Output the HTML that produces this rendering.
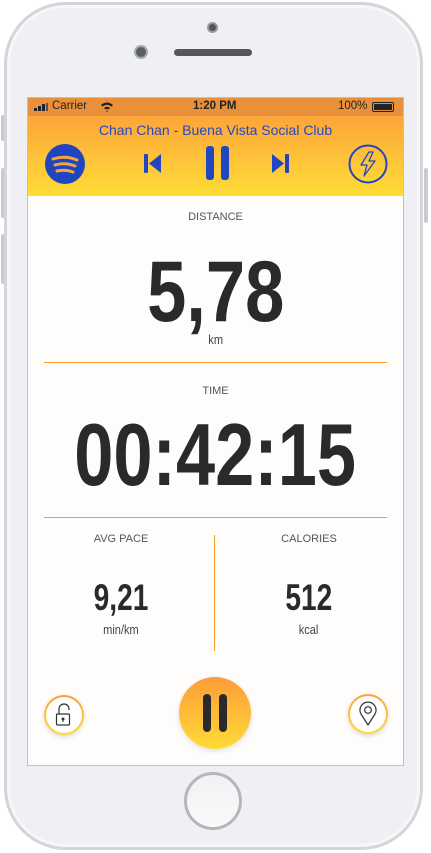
<!DOCTYPE html>
<html><head><style>
*{margin:0;padding:0;box-sizing:border-box}
body{width:431px;height:853px;background:#fff;position:relative;overflow:hidden;font-family:"Liberation Sans",sans-serif}
.phone{position:absolute;left:4px;top:2px;width:419px;height:848px;border-radius:62px;background:#eff0f3;border:3px solid #d4d5d8;box-shadow:inset 0 0 0 3px #f7f7f9}
.btn{position:absolute;background:#c9cacd;border-radius:2px}
.screen{position:absolute;left:27px;top:97px;width:377px;height:669px;background:#fefdfc;border:1px solid #c0c0c4;overflow:hidden}
.status{position:absolute;left:0;top:0;width:100%;height:18px;background:#e9913a;font-size:11.5px;color:#222}
.hdr{position:absolute;left:0;top:18px;width:100%;height:80px;background:linear-gradient(#fda53a,#fedd36)}
.n{position:absolute;left:0;width:100%;text-align:center;font-weight:bold;color:#2a2a2a}
.n span{display:inline-block}
.lbl{position:absolute;text-align:center;font-size:11px;color:#555;width:100%;left:0}
.u{position:absolute;text-align:center;font-size:13px;color:#444}
.u span{display:inline-block;transform:scaleX(.85)}
.rb{position:absolute;width:40px;height:40px;border-radius:50%;background:linear-gradient(#fca23a,#fedb37);padding:2px;box-shadow:0 2px 5px rgba(0,0,0,.15)}
.rb div{width:100%;height:100%;border-radius:50%;background:#fff;display:flex;align-items:center;justify-content:center}
</style></head><body>
<div class="btn" style="left:1px;top:115px;width:4px;height:26px"></div>
<div class="btn" style="left:1px;top:168px;width:4px;height:50px"></div>
<div class="btn" style="left:1px;top:234px;width:4px;height:50px"></div>
<div class="btn" style="left:424px;top:168px;width:4px;height:55px"></div>
<div class="phone"></div>
<div style="position:absolute;left:207px;top:22px;width:11px;height:11px;border-radius:50%;background:#555;border:2px solid #999"></div>
<div style="position:absolute;left:134px;top:45px;width:14px;height:14px;border-radius:50%;background:#5a5e6a;border:2px solid #aaa"></div>
<div style="position:absolute;left:174px;top:49px;width:78px;height:7px;border-radius:4px;background:#55575c"></div>
<div style="position:absolute;left:184px;top:772px;width:58px;height:58px;border-radius:50%;border:3px solid #b5b6ba;background:linear-gradient(#f1f2f4,#fafafb)"></div>
<div class="screen">
 <div class="status">
  <div style="position:absolute;left:6px;top:6px;width:14px;height:7px">
   <span style="position:absolute;left:0;bottom:0;width:3px;height:3px;background:#222"></span>
   <span style="position:absolute;left:4px;bottom:0;width:3px;height:5px;background:#222"></span>
   <span style="position:absolute;left:8px;bottom:0;width:3px;height:7px;background:#222"></span>
   <span style="position:absolute;left:12px;bottom:0;width:2px;height:8px;background:#555"></span>
  </div>
  <span style="position:absolute;left:24px;top:2px">Carrier</span>
  <svg style="position:absolute;left:72px;top:3px" width="14" height="11"><path d="M1 4 Q7 -1 13 4 L11.5 5.5 Q7 2 2.5 5.5Z M4 7 Q7 4.5 10 7 L8.5 8.5 Q7 7.5 5.5 8.5Z M6 10 L7 11 L8 10 Q7 9.3 6 10Z" fill="#222"/></svg>
  <span style="position:absolute;left:165px;top:2px;font-weight:bold">1:20 PM</span>
  <span style="position:absolute;left:310px;top:2px">100%</span>
  <div style="position:absolute;left:344px;top:4px;width:22px;height:10px;border:1px solid #222;border-radius:2px;padding:1px"><div style="width:100%;height:100%;background:#222"></div></div>
 </div>
 <div class="hdr">
  <div style="position:absolute;left:0;top:6px;width:100%;text-align:center;font-size:14px;color:#2548c2">Chan Chan - Buena Vista Social Club</div>
  <div style="position:absolute;left:17px;top:28px;width:40px;height:40px;border-radius:50%;background:#1f45bf">
   <svg width="40" height="40"><g fill="none" stroke="#f6a43b" stroke-width="3" stroke-linecap="round"><path d="M8 15 Q20 11 32 16"/><path d="M10 21 Q20 18 30 22"/><path d="M12 27 Q20 25 28 28"/></g></svg>
  </div>
  <svg style="position:absolute;left:115px;top:36px" width="20" height="24"><rect x="1" y="2" width="4" height="19" rx="1" fill="#2147c0"/><path d="M18 2 L6 11.5 L18 21Z" fill="#2147c0"/></svg>
  <svg style="position:absolute;left:176px;top:29px" width="28" height="36"><rect x="2" y="1" width="8" height="34" rx="3" fill="#2147c0"/><rect x="17" y="1" width="8" height="34" rx="3" fill="#2147c0"/></svg>
  <svg style="position:absolute;left:242px;top:36px" width="20" height="24"><rect x="15" y="2" width="4" height="19" rx="1" fill="#2147c0"/><path d="M2 2 L14 11.5 L2 21Z" fill="#2147c0"/></svg>
  <svg style="position:absolute;left:320px;top:28px" width="40" height="40"><circle cx="20" cy="20" r="18.5" fill="none" stroke="#2147c0" stroke-width="2"/><path d="M21 8 L13 21 L19 21 L16 32 L27 17 L21 17 L25 8Z" fill="none" stroke="#2147c0" stroke-width="1.3" stroke-linejoin="round"/></svg>
 </div>
 <div class="lbl" style="top:113px">DISTANCE</div>
 <div class="n" style="top:144px;font-size:86px;line-height:100px"><span style="transform:scaleX(.82)">5,78</span></div>
 <div class="u" style="left:0;width:100%;top:234px"><span>km</span></div>
 <div style="position:absolute;left:16px;top:264px;width:343px;height:1px;background:#f79b2c"></div>
 <div class="lbl" style="top:287px">TIME</div>
 <div class="n" style="top:307px;font-size:88px;line-height:100px"><span style="transform:scaleX(.8)">00:42:15</span></div>
 <div style="position:absolute;left:16px;top:419px;width:343px;height:1px;background:#aaa"></div>
 <div class="lbl" style="top:435px;left:8px;width:170px">AVG PACE</div>
 <div class="lbl" style="top:435px;left:196px;width:170px">CALORIES</div>
 <div style="position:absolute;left:186px;top:437px;width:1px;height:116px;background:#f79b2c"></div>
 <div class="n" style="top:478px;left:8px;width:170px;font-size:37px;line-height:44px"><span style="transform:scaleX(.76)">9,21</span></div>
 <div class="n" style="top:478px;left:196px;width:170px;font-size:37px;line-height:44px"><span style="transform:scaleX(.76)">512</span></div>
 <div class="u" style="left:8px;width:170px;top:524px"><span>min/km</span></div>
 <div class="u" style="left:196px;width:170px;top:524px"><span>kcal</span></div>
 <div class="rb" style="left:16px;top:597px"><div><svg width="20" height="24"><path d="M5 11 V6 A5 5 0 0 1 15 6 V7" fill="none" stroke="#333" stroke-width="1.2"/><rect x="2.5" y="11" width="13" height="11" rx="1" fill="none" stroke="#333" stroke-width="1.2"/><circle cx="9" cy="16" r="1.5" fill="#333"/><rect x="8.5" y="16" width="1" height="3" fill="#333"/></svg></div></div>
 <div class="rb" style="left:320px;top:596px"><div><svg width="20" height="26"><path d="M10 24 L3 13 A8 8 0 1 1 17 13 Z" fill="none" stroke="#333" stroke-width="1.2" stroke-linejoin="round"/><circle cx="10" cy="9" r="3.3" fill="none" stroke="#333" stroke-width="1.2"/></svg></div></div>
 <div style="position:absolute;left:151px;top:579px;width:72px;height:72px;border-radius:50%;background:linear-gradient(#fd9c38,#fedb37);box-shadow:0 2px 6px rgba(0,0,0,.12)">
  <div style="position:absolute;left:24px;top:17px;width:8px;height:38px;border-radius:4px;background:#2a2a2a"></div>
  <div style="position:absolute;left:40px;top:17px;width:8px;height:38px;border-radius:4px;background:#2a2a2a"></div>
 </div>
</div>
</body></html>
